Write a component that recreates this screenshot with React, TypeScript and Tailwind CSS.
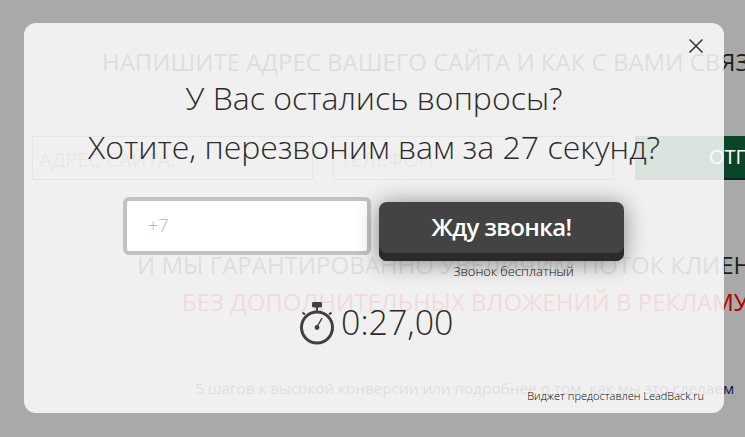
export default function App() {
  return (
    <div className="relative w-[745px] h-[437px] overflow-hidden bg-[#a9a9a9] font-['Open_Sans',sans-serif]">
      {/* page behind the dimmed overlay */}
      <div className="flex flex-col w-[1000px] text-[#1d1d1d]">
        <div className="pt-[43px] pl-[102px] h-[136px] text-[24px] leading-[38px] whitespace-nowrap">
          НАПИШИТЕ АДРЕС ВАШЕГО САЙТА И КАК С ВАМИ СВЯЗАТЬСЯ
        </div>
        <div className="flex pl-[32px] gap-[20px] h-[44px]">
          <div className="w-[281px] border border-[#555] pl-[6px] text-[20px] leading-[46px] text-[#666]">АДРЕС САЙТА:</div>
          <div className="w-[281px] border border-[#555] pl-[6px] text-[20px] leading-[46px] text-[#666]">ТЕЛЕФОН</div>
          <div className="w-[281px] ml-[1px] bg-[#0a4429] border-b-2 border-[#06281a] pl-[74px] text-[20px] leading-[42px] text-white">ОТПРАВИТЬ</div>
        </div>
        <div className="pt-[66px] pl-[137px] text-[24px] leading-[38px] whitespace-nowrap">
          И МЫ ГАРАНТИРОВАННО УВЕЛИЧИМ ПОТОК КЛИЕНТОВ
        </div>
        <div className="pl-[182px] -mt-[1px] text-[24px] leading-[38px] text-[#b30000] whitespace-nowrap">
          БЕЗ ДОПОЛНИТЕЛЬНЫХ ВЛОЖЕНИЙ В РЕКЛАМУ
        </div>
        <div className="pt-[55px] pl-[195px] text-[15.3px] leading-[24px] text-[#111a44] whitespace-nowrap">
          5 шагов к высокой конверсии или подробнее о том, как мы это сделаем
        </div>
      </div>

      {/* modal */}
      <div className="absolute left-[24px] top-[23px] w-[700px] h-[390px] rounded-[12px] bg-[#fafafa]/87 text-[#2b2b2b]">
        <button className="absolute right-[21px] top-[16px] w-[14px] h-[14px]" aria-label="Закрыть">
          <svg viewBox="0 0 14 14" className="w-[14px] h-[14px] block" fill="none" stroke="#333" strokeWidth="1.5">
            <path d="M0.5 0.5 L13.5 13.5 M13.5 0.5 L0.5 13.5" />
          </svg>
        </button>
        <div className="flex flex-col items-center pt-[53px]">
          <div className="text-[32px] leading-[44px] font-light whitespace-nowrap">У Вас остались вопросы?</div>
          <div className="mt-[5px] text-[32px] leading-[44px] font-light whitespace-nowrap">Хотите, перезвоним вам за 27 секунд?</div>
        </div>
        <div className="flex items-start pl-[99px] gap-[8px] mt-[28px]">
          <div className="w-[248px] h-[58px] border-[4px] border-[#c2c2c2] rounded-[6px] bg-white pl-[21px] text-[18px] leading-[48px] font-light text-[#b5b5b5]">+7</div>
          <div className="flex flex-col items-center mt-[5px]">
            <div className="w-[245px] h-[59px] rounded-[8px] bg-[#434343] shadow-[inset_0_-8px_0_#2b2b2b,0_2px_22px_rgba(0,0,0,0.45)] text-white text-[24px] leading-[50px] font-semibold tracking-[-0.6px] text-center">Жду звонка!</div>
            <div className="text-[13px] leading-[16px] mt-[2px] ml-[24px] font-light text-[#111]">Звонок бесплатный</div>
          </div>
        </div>
        <div className="flex items-center pl-[275px] mt-[20px] gap-[7px]">
          <svg viewBox="0 0 35 43" className="w-[35px] h-[43px] mt-[2px]" fill="none" stroke="#404040">
            <rect x="13" y="0" width="10" height="5.5" rx="1.4" fill="#404040" strokeWidth="0" />
            <path d="M18 5 V9" strokeWidth="2" />
            <circle cx="18" cy="25.5" r="15.5" strokeWidth="3" />
            <path d="M3.5 10.5 L6 12.5 M32.5 10.5 L30 12.5" strokeWidth="2.2" />
            <path d="M18 25 L23 16" strokeWidth="1.5" />
            <circle cx="18" cy="25.5" r="2.4" fill="#404040" strokeWidth="0" />
          </svg>
          <div className="text-[34px] leading-[46px] font-light whitespace-nowrap">0:27,00</div>
        </div>
        <div className="absolute right-[20px] bottom-[9px] text-[11px] leading-[16px] font-light text-black whitespace-nowrap">Виджет предоставлен LeadBack.ru</div>
      </div>
    </div>
  );
}
